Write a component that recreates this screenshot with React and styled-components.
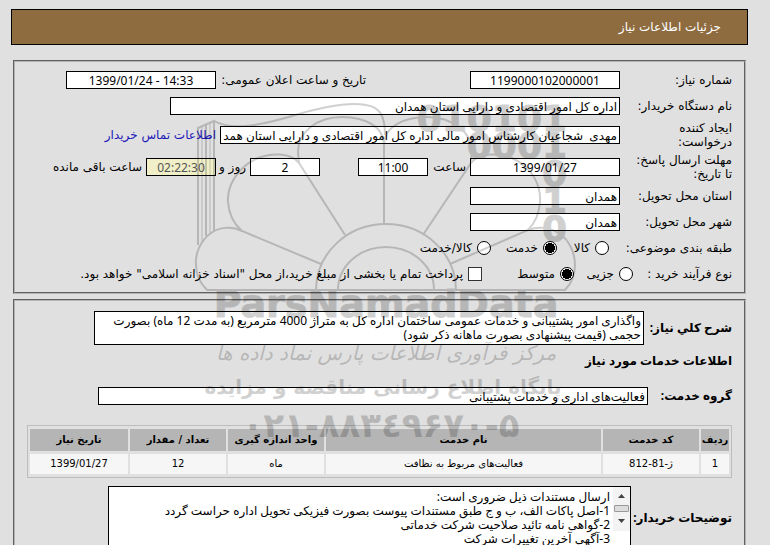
import React, { useState } from "react";
import styled, { createGlobalStyle } from "styled-components";

const documents = `ارسال مستندات ذیل ضروری است:
1-اصل پاکات الف، ب و ج طبق مستندات پیوست بصورت فیزیکی تحویل اداره حراست گردد
2-گواهی نامه تائید صلاحیت شرکت خدماتی
3-آگهی آخرین تغییرات شرکت`;

const services = [
  {
    id: 1,
    code: "ژ-81-812",
    name: "فعالیت‌های مربوط به نظافت",
    unit: "ماه",
    count: "12",
    date: "1399/01/27",
  },
];

const Watermark = () => (
  <WatermarkSvg width="400" height="360" viewBox="190 90 400 360" aria-hidden="true">
    <g fill="none" stroke="#000" strokeWidth="2">
      {/* tower on the left */}
      <path d="M198 245V128L214 121V231M206 236V125" strokeWidth="2" />
      <path d="M202 241V127M210 234V123" strokeWidth="1" />
      <path d="M214 121C232 131 262 125 292 116C325 106 350 102 366 105C380 107 385 116 385 135" />
      {/* petals */}
      <path d="M384 225V145C384 126 364 117 342 117C317 117 298 132 298 152L299 163L345 235" />
      <path d="M299 163C291 152 270 153 258 158C236 168 227 187 228 202C229 216 234 224 242 231L321 264" />
      <path d="M242 231C232 226 219 227 211 233C200 241 195 254 196 265C196 276 201 284 207 290H565C571 284 575 276 575 265C575 254 570 241 560 234C550 227 538 226 528 230L450 264" />
      <path d="M384 145C384 126 405 117 427 117C452 117 472 132 472 152L471 163L423 235" />
      <path d="M471 163C479 152 500 153 512 158C534 168 541 187 540 202C539 216 534 224 528 230" />
      {/* hub */}
      <path d="M316 290A69 65 0 0 1 456 290M338 290A48 43 0 0 1 434 290" />
    </g>
    <BinaryText textAnchor="end">
      <tspan x="567" y="131">010101</tspan>
      <tspan x="567" y="158">0001</tspan>
      <tspan x="567" y="186">0</tspan>
      <tspan x="567" y="213">1</tspan>
      <tspan x="567" y="241">0</tspan>
    </BinaryText>
    <BrandText x="386" y="317" textAnchor="middle">ParsNamadData</BrandText>
    <ScriptText x="386" y="360" textAnchor="middle">مرکز فرآوری اطلاعات پارس نماد داده ها</ScriptText>
    <TaglineText x="383" y="394" textAnchor="middle">پایگاه اطلاع رسانی مناقصه و مزایده</TaglineText>
    <PhoneText x="381" y="437" textAnchor="middle">۰۲۱-۸۸۳٤۹۶۷۰-۵</PhoneText>
  </WatermarkSvg>
);

const App = () => {
  const [category, setCategory] = useState("service");
  const [process, setProcess] = useState("medium");
  const [treasury, setTreasury] = useState(false);

  return (
    <Page>
      <GlobalStyle />
      <Header>جزئیات اطلاعات نیاز</Header>

      <Panel>
        <Row>
          <Label htmlFor="number">شماره نیاز:</Label>
          <Input id="number" $width={150} $center readOnly value="1199000102000001" />
          <PublishGroup>
            <label htmlFor="published">تاریخ و ساعت اعلان عمومی:</label>
            <Input id="published" $width={150} $center dir="ltr" readOnly value="1399/01/24 - 14:33" />
          </PublishGroup>
        </Row>

        <Row>
          <Label htmlFor="buyer">نام دستگاه خریدار:</Label>
          <Input id="buyer" $width={450} readOnly value="اداره کل امور اقتصادی و دارایی استان همدان" />
        </Row>

        <Row $tall>
          <Label htmlFor="creator">
            ایجاد کننده
            <br />
            درخواست:
          </Label>
          <Input
            id="creator"
            $width={400}
            readOnly
            value="مهدی  شجاعیان کارشناس امور مالی اداره کل امور اقتصادی و دارایی استان همدان"
          />
          <ContactLink href="#contact">اطلاعات تماس خریدار</ContactLink>
        </Row>

        <Row $tall>
          <Label htmlFor="deadline">
            مهلت ارسال پاسخ:
            <br />
            تا تاریخ:
          </Label>
          <Input id="deadline" $width={150} $center readOnly value="1399/01/27" />
          <Unit htmlFor="hour" $width={42}>ساعت</Unit>
          <Input id="hour" $width={70} $center readOnly value="11:00" />
          <DaysInput id="days" $width={70} $center readOnly value="2" />
          <Unit htmlFor="days" $width={34}>روز و</Unit>
          <TimerInput id="timer" $width={70} $center readOnly value="02:22:30" />
          <Unit htmlFor="timer">ساعت باقی مانده</Unit>
        </Row>

        <Row>
          <Label htmlFor="province">استان محل تحویل:</Label>
          <Input id="province" $width={150} readOnly value="همدان" />
        </Row>

        <Row>
          <Label htmlFor="city">شهر محل تحویل:</Label>
          <Input id="city" $width={150} readOnly value="همدان" />
        </Row>

        <Row role="radiogroup" aria-labelledby="category-title">
          <Title id="category-title" $width={123}>طبقه بندی موضوعی:</Title>
          <Choice $width={52}>
            <Radio name="category" checked={category === "goods"} onChange={() => setCategory("goods")} />
            کالا
          </Choice>
          <Choice $width={66}>
            <Radio name="category" checked={category === "service"} onChange={() => setCategory("service")} />
            خدمت
          </Choice>
          <Choice>
            <Radio name="category" checked={category === "both"} onChange={() => setCategory("both")} />
            کالا/خدمت
          </Choice>
        </Row>

        <Row role="radiogroup" aria-labelledby="process-title">
          <Title id="process-title" $width={99}>نوع فرآیند خرید :</Title>
          <Choice $width={59}>
            <Radio name="process" checked={process === "minor"} onChange={() => setProcess("minor")} />
            جزیی
          </Choice>
          <Choice $width={92}>
            <Radio name="process" checked={process === "medium"} onChange={() => setProcess("medium")} />
            متوسط
          </Choice>
          <Choice>
            <Checkbox checked={treasury} onChange={() => setTreasury(!treasury)} />
            پرداخت تمام یا بخشی از مبلغ خرید،از محل "اسناد خزانه اسلامی" خواهد بود.
          </Choice>
        </Row>
      </Panel>

      <DetailsPanel>
        <DetailRow>
          <BoldLabel htmlFor="summary" $width={88}>شرح کلي نیاز:</BoldLabel>
          <Summary
            id="summary"
            readOnly
            value="واگذاری امور پشتیبانی و خدمات عمومی ساختمان اداره کل به متراژ 4000 مترمربع (به مدت 12 ماه) بصورت حجمی (قیمت پیشنهادی بصورت ماهانه ذکر شود)"
          />
        </DetailRow>

        <SectionTitle>اطلاعات خدمات مورد نیاز</SectionTitle>

        <DetailRow $height={38}>
          <BoldLabel htmlFor="group" $width={84}>گروه خدمت:</BoldLabel>
          <Input id="group" $width={550} readOnly value="فعالیت‌های اداری و خدمات پشتیبانی" />
        </DetailRow>

        <TableWrap>
          <Table>
            <colgroup>
              <Col $width={28} />
              <Col $width={96} />
              <Col />
              <Col $width={96} />
              <Col $width={96} />
              <Col $width={98} />
            </colgroup>
            <thead>
              <tr>
                <Th>ردیف</Th>
                <Th>کد خدمت</Th>
                <Th>نام خدمت</Th>
                <Th>واحد اندازه گیری</Th>
                <Th>تعداد / مقدار</Th>
                <Th>تاریخ نیاز</Th>
              </tr>
            </thead>
            <tbody>
              {services.map((item) => (
                <tr key={item.id}>
                  <Td>{item.id}</Td>
                  <Td>{item.code}</Td>
                  <Td>{item.name}</Td>
                  <Td>{item.unit}</Td>
                  <Td>{item.count}</Td>
                  <Td>{item.date}</Td>
                </tr>
              ))}
            </tbody>
          </Table>
        </TableWrap>

        <DetailRow>
          <BoldLabel htmlFor="notes" $width={101}>توضیحات خریدار:</BoldLabel>
          <NotesBox>
            <ScrollBar>
              <ScrollButton type="button" aria-label="بالا">
                <svg width="7" height="4"><path d="M0 4L3.5 0L7 4Z" fill="#444" /></svg>
              </ScrollButton>
              <Thumb />
              <ScrollButton type="button" aria-label="پایین">
                <svg width="7" height="4"><path d="M0 0L3.5 4L7 0Z" fill="#444" /></svg>
              </ScrollButton>
            </ScrollBar>
            <Notes id="notes" readOnly value={documents} />
          </NotesBox>
        </DetailRow>
      </DetailsPanel>

      <Watermark />
    </Page>
  );
};

export default App;

// Styled Components
const GlobalStyle = createGlobalStyle`
  * {
    box-sizing: border-box;
  }

  body {
    margin: 0;
    background: #e0e0e0;
    font-family: "DejaVu Sans", sans-serif;
  }

  input, textarea, button {
    font-family: "Noto Sans", "DejaVu Sans", sans-serif;
  }

  body, input, textarea, button {
    font-size: 12px;
    line-height: 14px;
    color: #000;
  }
`;

const Page = styled.div`
  direction: rtl;
  position: relative;
  height: 100vh;
  overflow: hidden;
  padding: 9px 22px 0 11px;
`;

const Header = styled.header`
  display: flex;
  align-items: center;
  height: 36px;
  padding: 0 26px;
  margin-bottom: 15px;
  border: 1px solid #000;
  background: #8e6c40;
  color: #fff;
`;

const Panel = styled.fieldset`
  min-width: 0;
  margin: 0 2px 5px;
  padding: 5px 12px 5px 11px;
  border: 2px groove #b4b4b4;
`;

const DetailsPanel = styled(Panel)`
  padding-top: 10px;
`;

const Row = styled.div`
  display: flex;
  align-items: center;
  height: ${(props) => (props.$tall ? "32px" : "26px")};
  white-space: nowrap;
`;

const DetailRow = styled.div`
  display: flex;
  align-items: center;
  min-height: ${(props) => props.$height || 34}px;
`;

const Label = styled.label`
  flex: none;
  width: 112px;
`;

const Title = styled.span`
  flex: none;
  width: ${(props) => props.$width}px;
`;

const BoldLabel = styled.label`
  flex: none;
  width: ${(props) => props.$width}px;
  font-family: "Noto Sans", "DejaVu Sans", sans-serif;
  font-weight: bold;
  white-space: nowrap;
`;

const Input = styled.input`
  flex: none;
  width: ${(props) => props.$width}px;
  max-width: 100%;
  height: 18px;
  padding: 0 2px;
  border: 1px solid #000;
  border-radius: 0;
  background: #fff;
  text-align: ${(props) => (props.$center ? "center" : "right")};
  outline: none;
`;

const DaysInput = styled(Input)`
  margin-right: 38px;
`;

const TimerInput = styled(Input)`
  background: #f0efc8;
  color: #555;
`;

const PublishGroup = styled.div`
  display: flex;
  align-items: center;
  justify-content: space-between;
  width: 300px;
  margin-right: 104px;
`;

const Unit = styled.label`
  flex: none;
  width: ${(props) => (props.$width ? props.$width + "px" : "auto")};
  padding-right: 4px;
`;

const ContactLink = styled.a`
  margin-right: 4px;
  color: #1c17b8;
  text-decoration: none;
`;

const Choice = styled.label`
  display: flex;
  flex: none;
  align-items: center;
  gap: 5px;
  width: ${(props) => (props.$width ? props.$width + "px" : "auto")};
`;

const Radio = styled.input.attrs({ type: "radio" })`
  appearance: none;
  flex: none;
  width: 14px;
  height: 14px;
  margin: 0;
  border: 1px solid #000;
  border-radius: 50%;
  background: #fff;

  &:checked {
    background: radial-gradient(circle, #000 5px, #fff 5px);
  }
`;

const Checkbox = styled.input.attrs({ type: "checkbox" })`
  appearance: none;
  flex: none;
  width: 14px;
  height: 14px;
  margin: 0;
  border: 1px solid #333;
  background: #fff;

  &:checked {
    background: #333;
  }
`;

const Summary = styled.textarea`
  width: 550px;
  height: 34px;
  padding: 2px;
  border: 1px solid #000;
  background: #fff;
  resize: none;
  overflow: hidden;
  outline: none;
`;

const SectionTitle = styled.h2`
  margin: 0;
  font-family: "Noto Sans", "DejaVu Sans", sans-serif;
  font-size: 12px;
  line-height: 32px;
`;

const TableWrap = styled.div`
  padding: 10px 0 8px 1px;
`;

const Table = styled.table`
  width: 100%;
  table-layout: fixed;
  border: 1px solid #bdbdbd;
  border-collapse: separate;
  border-spacing: 2px 3px;
  font-size: 10px;
  text-align: center;
`;

const Col = styled.col`
  width: ${(props) => (props.$width ? props.$width + "px" : "auto")};
`;

const Th = styled.th`
  height: 22px;
  padding: 0;
  background: #b5b5b5;
  white-space: nowrap;
`;

const Td = styled.td`
  height: 20px;
  padding: 0;
  background: #f6f6f6;
`;

const NotesBox = styled.div`
  display: flex;
  width: 523px;
  height: 64px;
  border: 1px solid #000;
  background: #fff;
`;

const ScrollBar = styled.div`
  display: flex;
  flex-direction: column;
  align-items: center;
  width: 17px;
  height: 44px;
  background: #f3f3f3;
`;

const ScrollButton = styled.button`
  display: flex;
  align-items: center;
  justify-content: center;
  width: 17px;
  height: 18px;
  padding: 0;
  border: none;
  background: none;
`;

const Thumb = styled.div`
  width: 15px;
  height: 7px;
  border: 1px solid #999;
  border-radius: 1px;
  background: #ddd;
`;

const Notes = styled.textarea`
  flex: 1;
  padding: 3px;
  border: none;
  background: none;
  resize: none;
  overflow: hidden;
  outline: none;
`;

const WatermarkSvg = styled.svg`
  position: absolute;
  top: 90px;
  left: 190px;
  opacity: 0.18;
  pointer-events: none;
`;

const BinaryText = styled.text`
  direction: ltr;
  font-size: 36px;
  font-weight: bold;
  stroke: #000;
  stroke-width: 1px;
`;

const BrandText = styled.text`
  direction: ltr;
  font-size: 38px;
  font-weight: bold;
  stroke: #000;
  stroke-width: 1px;
`;

const ScriptText = styled.text`
  direction: rtl;
  font-size: 20px;
  font-style: italic;
`;

const TaglineText = styled.text`
  direction: rtl;
  font-size: 20px;
  font-weight: bold;
`;

const PhoneText = styled.text`
  direction: ltr;
  unicode-bidi: bidi-override;
  font-size: 34px;
  font-weight: bold;
`;
